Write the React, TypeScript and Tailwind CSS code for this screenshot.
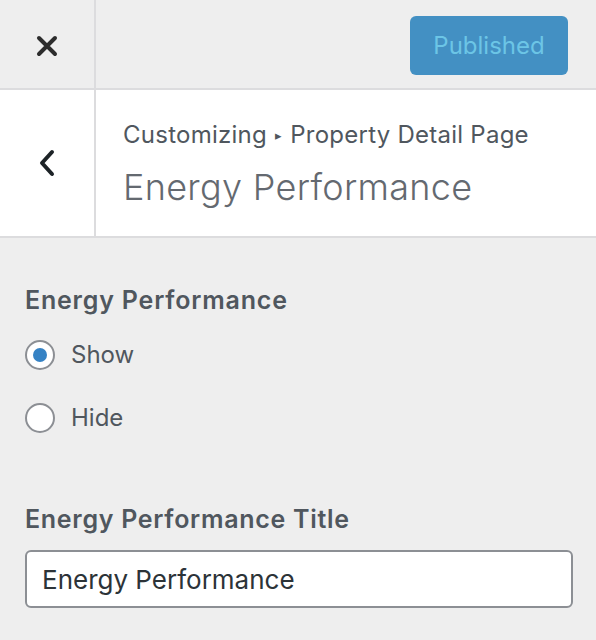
import React from "react";

export default function App() {
  return (
    <div className="w-[596px] h-[640px] bg-[#eeeeee] overflow-hidden" style={{ fontFamily: "Inter, 'Liberation Sans', sans-serif" }}>
      {/* top bar */}
      <div className="flex h-[90px] border-b-2 border-[#dcdcde] bg-[#eeeeee]">
        <div className="w-[96px] border-r-2 border-[#dcdcde] flex items-center justify-center pt-[4px]">
          <svg width="22" height="22" viewBox="0 0 22 22">
            <path d="M3 3 L19 19 M19 3 L3 19" stroke="#2c2c2c" strokeWidth="4" strokeLinecap="round" />
          </svg>
        </div>
        <div className="flex-1 flex justify-end items-start pt-[16px] pr-[28px]">
          <div className="w-[158px] h-[59px] rounded-[6px] bg-[#4390c3] flex items-center justify-center text-[24px] text-[#6cc5e6]">
            Published
          </div>
        </div>
      </div>
      {/* section header */}
      <div className="flex h-[148px] border-b-2 border-[#dcdcde] bg-white">
        <div className="w-[96px] border-r-2 border-[#dcdcde] flex items-center justify-center">
          <svg width="18" height="28" viewBox="0 0 18 28">
            <path d="M14 3 L4 14 L14 25" stroke="#1d2327" strokeWidth="4" fill="none" strokeLinecap="round" strokeLinejoin="round" />
          </svg>
        </div>
        <div className="flex-1 flex flex-col pl-[27px] pt-[30px]">
          <div className="text-[24px] leading-[30px] tracking-[0.25px] text-[#50575e] flex items-center">
            <span>Customizing</span>
            <span className="text-[13px] mx-[8px]">▸</span>
            <span>Property Detail Page</span>
          </div>
          <div className="text-[36px] leading-[44px] font-light tracking-[0.3px] text-[#646970] mt-[15px]">Energy Performance</div>
        </div>
      </div>
      {/* body */}
      <div className="px-[25px]">
        <div className="pt-[47px] text-[25px] leading-[30px] font-semibold tracking-[0.8px] text-[#50575e]">Energy Performance</div>
        <div className="mt-[23px] flex items-center h-[34px]">
          <div className="w-[30px] h-[30px] rounded-full border-2 border-[#8c8f94] bg-white flex items-center justify-center">
            <div className="w-[14px] h-[14px] rounded-full bg-[#3582c4]" />
          </div>
          <span className="ml-[16px] text-[24px] text-[#50575e]">Show</span>
        </div>
        <div className="mt-[29px] flex items-center h-[34px]">
          <div className="w-[30px] h-[30px] rounded-full border-2 border-[#8c8f94] bg-white" />
          <span className="ml-[16px] text-[24px] text-[#50575e]">Hide</span>
        </div>
        <div className="mt-[69px] text-[25px] leading-[30px] font-semibold tracking-[0.7px] text-[#50575e]">Energy Performance Title</div>
        <div className="mt-[16px] w-[548px] h-[58px] rounded-[6px] border-2 border-[#8c8f94] bg-white flex items-center pl-[15px] text-[26px] text-[#2c3338]">
          Energy Performance
        </div>
      </div>
    </div>
  );
}
